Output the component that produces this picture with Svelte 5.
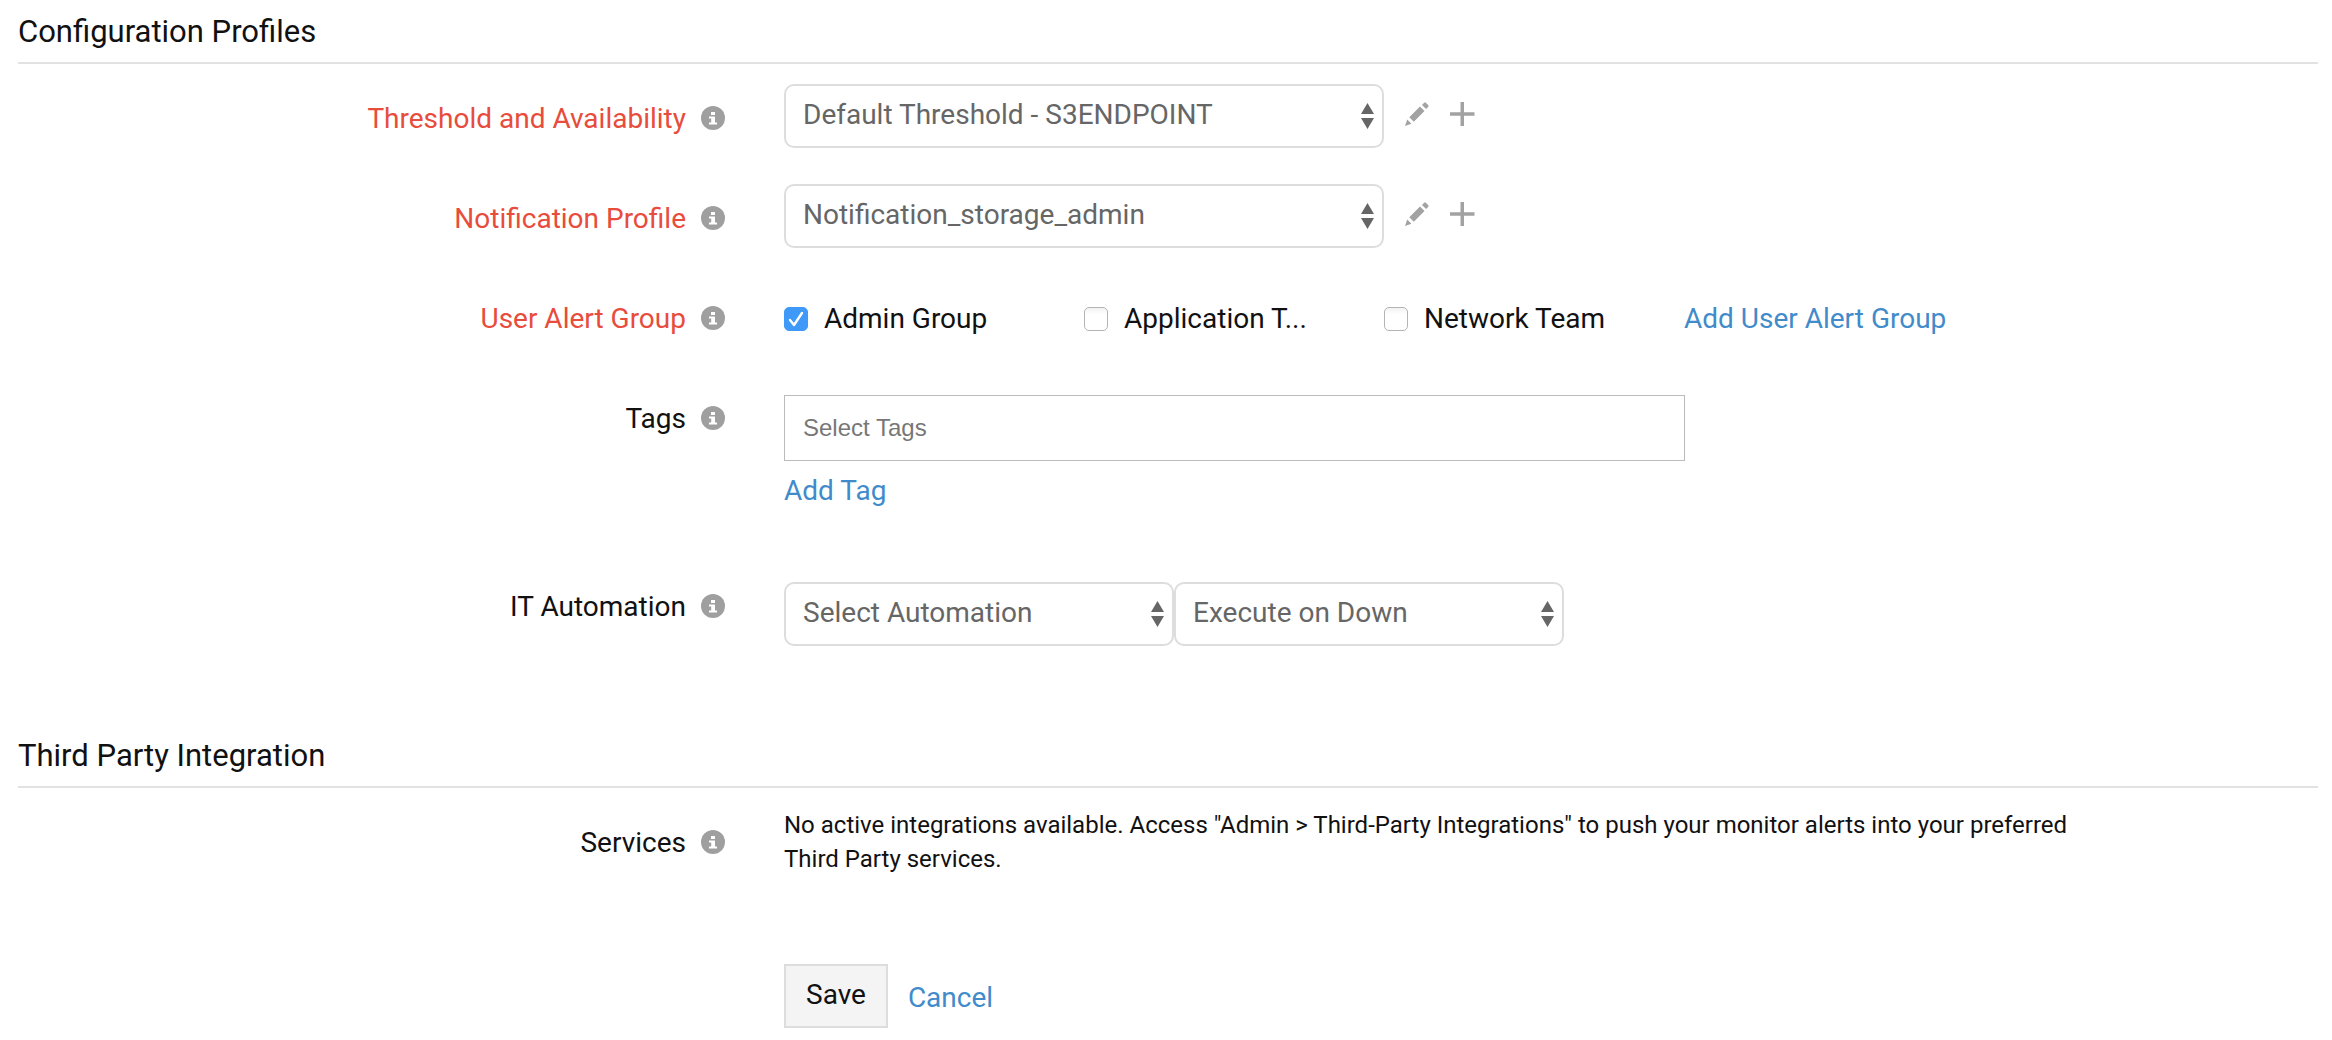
<script>
  let threshold = $state('Default Threshold - S3ENDPOINT');
  let notification = $state('Notification_storage_admin');
  let automation = $state('Select Automation');
  let trigger = $state('Execute on Down');
  let tags = $state('');
  let groups = $state([
    { id: 'admin', name: 'Admin Group', checked: true },
    { id: 'application', name: 'Application T...', checked: false },
    { id: 'network', name: 'Network Team', checked: false }
  ]);
</script>

{#snippet info()}
  <svg class="info" viewBox="0 0 24 24" aria-hidden="true">
    <circle cx="12" cy="12" r="12" fill="#9f9f9f" />
    <path d="M10 6h4v3h-4zM8 10.500h6v6h2v2H8v-2h2.200v-4H8z" fill="#fff" />
  </svg>
{/snippet}

{#snippet arrows()}
  <svg class="arrows" viewBox="0 0 13 26" aria-hidden="true">
    <path d="M6.500 0 13 11H0zM6.500 26 0 15h13z" fill="#666" />
  </svg>
{/snippet}

{#snippet actions(name)}
  <button type="button" class="icon-button" aria-label="Edit {name}">
    <svg viewBox="0 0 24 24" aria-hidden="true">
      <path d="M0 24 2.200 17.600 6.400 21.800zM4.300 15.200 15 4.500 19.500 9 8.800 19.700zM17 2.900 19.200.700Q20 0 20.800.700L23.300 3.200Q24 4 23.300 4.800L21.100 7z" fill="#a2a2a2" />
    </svg>
  </button>
  <button type="button" class="icon-button" aria-label="Add {name}">
    <svg viewBox="0 0 24 24" aria-hidden="true">
      <path d="M10.500 0h3.500v10.300h10.500v3.500H14V24h-3.500V13.800H0v-3.500h10.500z" fill="#a2a2a2" />
    </svg>
  </button>
{/snippet}

<form onsubmit={(e) => e.preventDefault()}>
  <section class="profiles">
    <h2>Configuration Profiles</h2>
    <div class="row">
      <div class="label required"><label for="threshold">Threshold and Availability</label>{@render info()}</div>
      <div class="field">
        <span class="select wide">
          <select id="threshold" bind:value={threshold}><option>Default Threshold - S3ENDPOINT</option></select>
          {@render arrows()}
        </span>
        {@render actions('threshold profile')}
      </div>
    </div>
    <div class="row">
      <div class="label required"><label for="notification">Notification Profile</label>{@render info()}</div>
      <div class="field">
        <span class="select wide">
          <select id="notification" bind:value={notification}><option>Notification_storage_admin</option></select>
          {@render arrows()}
        </span>
        {@render actions('notification profile')}
      </div>
    </div>
    <div class="row">
      <div class="label required"><span id="groups-label">User Alert Group</span>{@render info()}</div>
      <div class="field groups" role="group" aria-labelledby="groups-label">
        {#each groups as group (group.id)}
          <label class="check" for={group.id}>
            <input type="checkbox" id={group.id} bind:checked={group.checked} />
            <span>{group.name}</span>
          </label>
        {/each}
        <a href="#add-group">Add User Alert Group</a>
      </div>
    </div>
    <div class="row tags-row">
      <div class="label"><label for="tags">Tags</label>{@render info()}</div>
      <div class="tags">
        <input type="text" id="tags" placeholder="Select Tags" bind:value={tags} />
        <a href="#add-tag">Add Tag</a>
      </div>
    </div>
    <div class="row">
      <div class="label"><label for="automation">IT Automation</label>{@render info()}</div>
      <div class="field automation">
        <span class="select">
          <select id="automation" bind:value={automation}><option>Select Automation</option></select>
          {@render arrows()}
        </span>
        <span class="select">
          <select aria-label="Automation trigger" bind:value={trigger}><option>Execute on Down</option></select>
          {@render arrows()}
        </span>
      </div>
    </div>
  </section>

  <section>
    <h2>Third Party Integration</h2>
    <div class="row services">
      <div class="label"><span>Services</span>{@render info()}</div>
      <p>No active integrations available. Access "Admin &gt; Third-Party Integrations" to push your monitor alerts into your preferred Third Party services.</p>
    </div>
    <div class="row">
      <div class="buttons">
        <button type="submit" class="save">Save</button>
        <a class="cancel" href="#cancel">Cancel</a>
      </div>
    </div>
  </section>
</form>

<style>
  :global(body) {
    margin: 0;
    background: #fff;
  }

  form {
    padding: 0 14px 12px 18px;
    color: #111;
    font: 28px/36px Roboto, 'Liberation Sans', sans-serif;
  }

  h2 {
    margin: 0 0 20px;
    padding-top: 2px;
    border-bottom: 2px solid #e2e2e2;
    font-size: 31px;
    font-weight: 400;
    line-height: 60px;
  }

  a {
    color: #428bca;
    text-decoration: none;
  }

  .profiles {
    padding-bottom: 78px;
  }

  .row {
    display: grid;
    grid-template-columns: 1fr 2fr;
    min-height: 100px;
    padding-right: 2px;
  }

  .row:last-child {
    min-height: 0;
  }

  .label {
    display: flex;
    align-items: center;
    justify-content: flex-end;
    align-self: start;
    gap: 15px;
    padding: 15px 59px 0 0;
  }

  .label label,
  .label span {
    padding-top: 2px;
  }

  .required {
    color: #e74c3c;
  }

  .info {
    width: 24px;
    height: 24px;
    flex: none;
  }

  .field {
    display: flex;
    align-items: center;
    align-self: start;
  }

  .select {
    position: relative;
    width: 390px;
  }

  .wide {
    width: 600px;
  }

  select {
    display: block;
    width: 100%;
    height: 64px;
    padding: 0 40px 2px 17px;
    border: 2px solid #ddd;
    border-radius: 10px;
    background: #fff;
    color: #666;
    font: inherit;
    appearance: none;
  }

  .arrows {
    position: absolute;
    top: 19px;
    right: 10px;
    width: 13px;
    height: 26px;
    pointer-events: none;
  }

  .icon-button {
    width: 24px;
    height: 24px;
    margin: 0 0 4px 21px;
    padding: 0;
    border: 0;
    background: none;
  }

  .icon-button svg {
    display: block;
    overflow: visible;
  }

  .groups {
    padding-top: 17px;
  }

  .check {
    display: flex;
    align-items: center;
    gap: 16px;
    width: 300px;
  }

  .check input {
    width: 24px;
    height: 24px;
    margin: 0;
    border: 1px solid #b4b4b4;
    border-radius: 5px;
    background: linear-gradient(#f2f2f2, #fff 30%);
    appearance: none;
  }

  .check input:checked {
    border-color: #3f99f8;
    background: #3f99f8 url("data:image/svg+xml,%3Csvg xmlns='http://www.w3.org/2000/svg' viewBox='0 0 22 22'%3E%3Cpath d='M5 12l4 5 8-12' fill='none' stroke='white' stroke-width='2.400' stroke-linecap='round' stroke-linejoin='round'/%3E%3C/svg%3E");
  }

  .tags-row {
    min-height: 188px;
  }

  .tags {
    display: flex;
    flex-direction: column;
    align-items: flex-start;
    gap: 12px;
    padding-top: 11px;
  }

  .tags input {
    box-sizing: border-box;
    width: 901px;
    max-width: 100%;
    height: 66px;
    padding: 0 18px;
    border: 1px solid #bbb;
    font: 24px 'Liberation Sans', Arial, sans-serif;
  }

  .tags input::placeholder {
    color: #777;
  }

  .automation {
    padding-top: 10px;
  }

  .services {
    min-height: 156px;
  }

  p {
    max-width: 85%;
    margin: 0;
    font-size: 24px;
    line-height: 34px;
  }

  .buttons {
    display: flex;
    grid-column: 2;
    align-items: center;
    gap: 20px;
  }

  .save {
    height: 64px;
    padding: 0 20px 2px;
    border: 2px solid #ddd;
    background: #f4f4f4;
    color: #111;
    font: inherit;
  }

  .cancel {
    padding-top: 4px;
  }
</style>
